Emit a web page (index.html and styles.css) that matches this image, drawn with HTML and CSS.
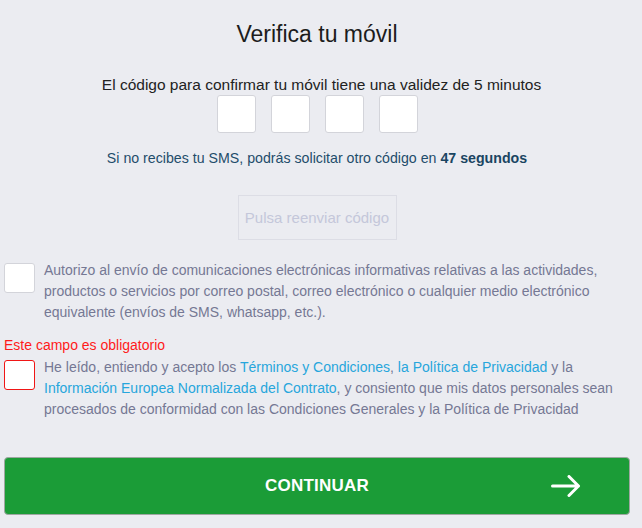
FILE: index.html
```html
<!DOCTYPE html>
<html>
<head>
  <title>Verifica tu móvil</title>
  <link rel="stylesheet" href="styles.css">
</head>
<body>
  <div class="page">
    <h1 class="title">Verifica tu móvil</h1>

    <p class="validity">El código para confirmar tu móvil tiene una validez de 5 minutos</p>

    <div class="code-inputs">
      <input type="text" maxlength="1" class="code-box">
      <input type="text" maxlength="1" class="code-box">
      <input type="text" maxlength="1" class="code-box">
      <input type="text" maxlength="1" class="code-box">
    </div>

    <p class="sms-info">Si no recibes tu SMS, podrás solicitar otro código en <strong>47 segundos</strong></p>

    <div class="resend">
      <button class="resend-btn" disabled>Pulsa reenviar código</button>
    </div>

    <label class="check-row">
      <span class="check"></span>
      <span class="check-text">Autorizo al envío de comunicaciones electrónicas informativas relativas a las actividades, productos o servicios por correo postal, correo electrónico o cualquier medio electrónico equivalente (envíos de SMS, whatsapp, etc.).</span>
    </label>

    <p class="field-error">Este campo es obligatorio</p>
    <label class="check-row check-row-error">
      <span class="check check-invalid"></span>
      <span class="check-text">He leído, entiendo y acepto los <a href="#">Términos y Condiciones</a>, <a href="#">la Política de Privacidad</a> y la <a href="#">Información Europea Normalizada del Contrato</a>, y consiento que mis datos personales sean procesados de conformidad con las Condiciones Generales y la Política de Privacidad</span>
    </label>

    <button class="continue-btn">
      CONTINUAR
      <svg class="continue-arrow" width="30" height="22" viewBox="0 0 30 22">
        <path d="M1.5 11 H27.5 M18 1.5 L27.5 11 L18 20.5" fill="none" stroke="#fff" stroke-width="3" stroke-linecap="round" stroke-linejoin="round"/>
      </svg>
    </button>
  </div>
</body>
</html>
```

FILE: styles.css
```css
body {
  margin: 0;
  background: #ebecf1;
  font-family: 'Liberation Sans', Arial, sans-serif;
  color: #222;
}

.page {
  width: 626px;
  padding: 20px 0 0 4px;
}

.title {
  margin: 0;
  font-size: 23px;
  line-height: 28px;
  font-weight: normal;
  text-align: center;
  color: #1c1c1c;
}

.validity {
  margin: 28px 0 0;
  padding-left: 9px;
  font-size: 15.5px;
  line-height: 18px;
  text-align: center;
}

.code-inputs {
  display: flex;
  justify-content: center;
  gap: 15px;
  margin-top: 1px;
}

.code-box {
  box-sizing: border-box;
  width: 39px;
  height: 38px;
  margin: 0;
  padding: 0;
  border: 1px solid #d3d4da;
  border-radius: 3px;
  background: #fff;
  text-align: center;
  font-size: 18px;
}

.sms-info {
  margin: 17px 0 0;
  font-size: 14.2px;
  line-height: 17px;
  text-align: center;
  color: #1f4d6b;
}

.sms-info strong {
  color: #1a4562;
}

.resend {
  display: flex;
  justify-content: center;
  margin-top: 28px;
}

.resend-btn {
  box-sizing: border-box;
  width: 159px;
  height: 45px;
  background: transparent;
  border: 1px solid #dcdde5;
  font-family: inherit;
  font-size: 15px;
  color: #c4c7da;
  padding: 0;
}

.check-row {
  display: flex;
  align-items: flex-start;
  gap: 9px;
  margin-top: 20px;
}

.check {
  box-sizing: border-box;
  flex: none;
  width: 31px;
  height: 30px;
  margin-top: 3px;
  background: #fff;
  border: 1px solid #d3d4da;
  border-radius: 3px;
}

.check-invalid {
  border-color: #f01616;
}

.check-text {
  font-size: 14px;
  line-height: 21px;
  color: #757894;
}

.check-text a {
  color: #27a6dc;
  text-decoration: none;
}

.field-error {
  margin: 14px 0 0;
  font-size: 14px;
  line-height: 17px;
  color: #ff1a1a;
}

.check-row-error {
  margin-top: 3px;
}

.continue-btn {
  position: relative;
  display: block;
  width: 626px;
  height: 58px;
  margin-top: 37px;
  background: #1b9c37;
  border: 1px solid #9fa7a2;
  border-radius: 4px;
  color: #fff;
  font-family: inherit;
  font-size: 17px;
  font-weight: bold;
  letter-spacing: 0.2px;
  padding: 0;
}

.continue-arrow {
  position: absolute;
  right: 48px;
  top: 17px;
}
```
